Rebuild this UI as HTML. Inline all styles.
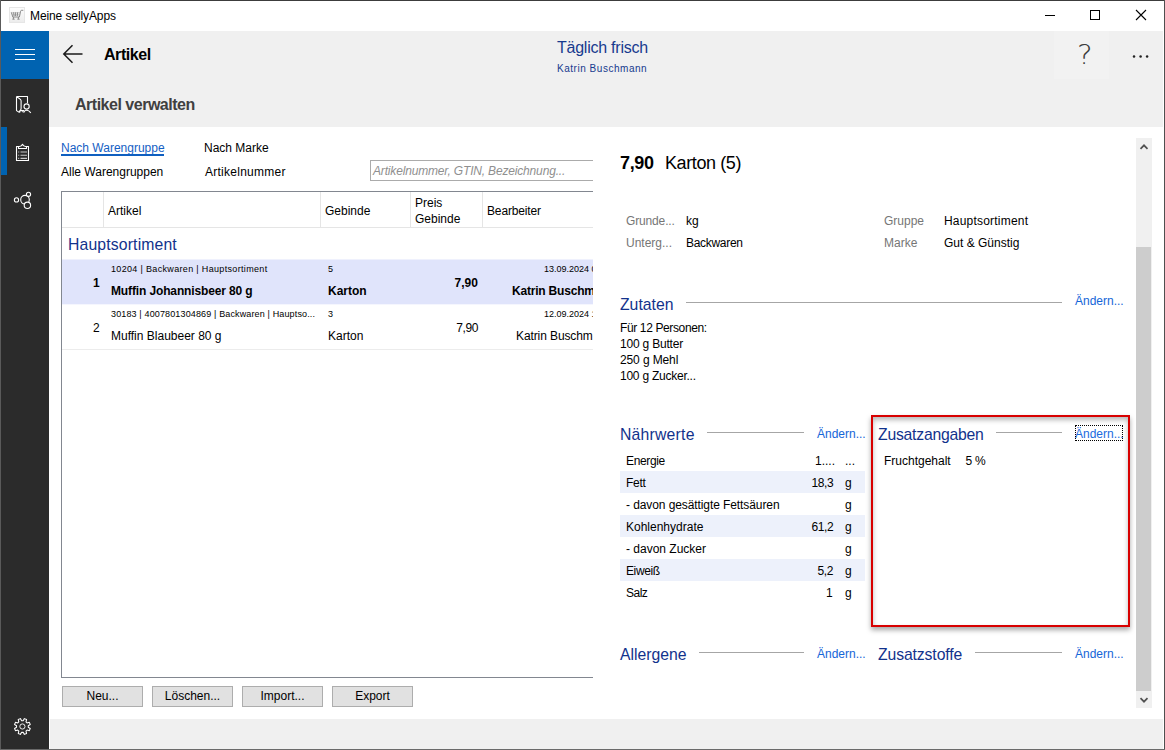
<!DOCTYPE html>
<html lang="de">
<head>
<meta charset="utf-8">
<title>Meine sellyApps</title>
<style>
*{box-sizing:border-box;margin:0;padding:0}
html,body{width:1165px;height:750px;overflow:hidden;background:#fff}
body{font-family:"Liberation Sans",sans-serif;font-size:12px;color:#000;position:relative}
#win{position:absolute;left:0;top:0;width:1165px;height:750px;overflow:hidden;background:#fff}
.abs{position:absolute}
.t{position:absolute;white-space:nowrap;line-height:1;font-size:12px;transform-origin:0 0}
.b{font-weight:bold}
.blue{color:#1a3c8c}
.link{color:#1565d8}
.gray{color:#767676}
.hd{font-size:15.75px;color:#12328c}
.hl{position:absolute;height:1px;background:#a6a6a6}
.sm{font-size:9px}
.btn{position:absolute;height:21px;width:81px;top:686px;background:#e1e1e1;border:1px solid #adadad;text-align:center;line-height:19px;font-size:12px}
.nrow{position:absolute;left:620px;width:245px;height:22px}
.nrow.alt{background:#edf1fb}
</style>
</head>
<body>
<div id="win">
<!-- frame -->
<div class="abs" style="left:0;top:0;width:1165px;height:1px;background:#3c3c3c"></div>
<div class="abs" style="left:0;top:0;width:1px;height:750px;background:#5a5a5a"></div>
<div class="abs" style="left:1164px;top:0;width:1px;height:750px;background:#4f4f4f"></div>
<div class="abs" style="left:0;top:749px;width:1165px;height:1px;background:#6a6a6a"></div>

<!-- title bar -->
<div class="abs" id="titlebar" style="left:1px;top:1px;width:1163px;height:30px;background:#fff"></div>
<span class="t" style="left:30px;top:10px;letter-spacing:-0.1px">Meine sellyApps</span>

<!-- header gray -->
<div class="abs" style="left:49px;top:31px;width:1114px;height:96px;background:#f0f0f0"></div>
<!-- status bar -->
<div class="abs" style="left:50px;top:719px;width:1113px;height:30px;background:#f0f0f0"></div>

<!-- sidebar -->
<div class="abs" style="left:1px;top:31px;width:48px;height:718px;background:#2b2b2b"></div>
<div class="abs" style="left:1px;top:31px;width:48px;height:48px;background:#0063b1"></div>
<div class="abs" style="left:1px;top:127px;width:6px;height:48px;background:#0063b1"></div>

<!-- title bar icon + window buttons -->
<svg class="abs" style="left:9px;top:7px" width="16" height="16" viewBox="0 0 16 16">
<defs><linearGradient id="ig" x1="0" y1="0" x2="0" y2="1"><stop offset="0" stop-color="#fdfdfd"/><stop offset="1" stop-color="#ececec"/></linearGradient></defs>
<rect x="0.5" y="0.5" width="15" height="15" fill="url(#ig)" stroke="#e6e6e6"/>
<path d="M14.300 3.300H12.600Q11.800 3.300 11.600 4.200L10.400 10H3.800L2.300 5.300M4.600 5.300L5.100 9M6.600 5.300V9M8.600 5.300L8.300 9M4.400 10V12M9.400 10V12M3.400 12.200H5.600M8.400 12.200H10.600" fill="none" stroke="#8a8a8a" stroke-width="1"/>
<path d="M2.600 5.800H11M3.300 7.800H10.700" fill="none" stroke="#8a8a8a" stroke-width="0.8" stroke-opacity="0.55"/>
</svg>
<div class="abs" style="left:1045px;top:15px;width:10px;height:1px;background:#000"></div>
<div class="abs" style="left:1090px;top:10px;width:10px;height:10px;border:1px solid #000"></div>
<svg class="abs" style="left:1135px;top:9px" width="12" height="12" viewBox="0 0 12 12"><path d="M1 1l10 10M11 1L1 11" stroke="#000" stroke-width="1.100" fill="none"/></svg>

<!-- hamburger -->
<div class="abs" style="left:15px;top:49px;width:20px;height:1px;background:#fff"></div>
<div class="abs" style="left:15px;top:54px;width:20px;height:1px;background:#fff"></div>
<div class="abs" style="left:15px;top:59px;width:20px;height:1px;background:#fff"></div>

<!-- header content -->
<svg class="abs" style="left:62px;top:44px" width="22" height="20" viewBox="0 0 22 20"><path d="M20.500 10H2M10.500 1.200L1.800 10l8.700 8.800" stroke="#1a1a1a" stroke-width="1.500" fill="none"/></svg>
<span class="t b" style="left:104px;top:47px;font-size:16px;letter-spacing:-0.45px">Artikel</span>
<span class="t b" style="left:75px;top:97px;font-size:16px;letter-spacing:-0.49px;color:#404040">Artikel verwalten</span>
<span class="t" style="left:557px;top:40px;font-size:16px;letter-spacing:-0.24px;color:#173a8e">Täglich frisch</span>
<span class="t" style="left:557px;top:64px;font-size:10px;color:#173a8e;letter-spacing:0.53px">Katrin Buschmann</span>
<div class="abs" style="left:1054px;top:31px;width:55px;height:48px;background:#f2f2f2"></div>
<span class="t" style="left:1076.700px;top:41px;font-family:'DejaVu Sans Light','DejaVu Sans',sans-serif;font-weight:200;font-size:27px;color:#3c3c3c;transform:scaleX(1.09)">?</span>
<svg class="abs" style="left:1130px;top:52px" width="22" height="8" viewBox="0 0 22 8"><circle cx="4" cy="4.400" r="1.250" fill="#222"/><circle cx="10.600" cy="4.400" r="1.250" fill="#222"/><circle cx="17.100" cy="4.400" r="1.250" fill="#222"/></svg>

<!-- sidebar icons -->
<svg class="abs" style="left:10px;top:90px" width="28" height="28" viewBox="10 90 28 28" fill="none" stroke="#fff" stroke-width="1.100" stroke-linejoin="round">
<path d="M16.500 96.500H27.500V103.200M16.500 96.500V110.600L19.600 112.500M16.500 96.500L20.400 99.400Q21.100 100 21.100 101V108.500Q21.100 109.800 19.800 110.600V112.500M19.800 110.600H24.200M22.900 110.600V112.300"/>
<circle cx="26.600" cy="106.500" r="2.600"/>
<path d="M23.700 112.600Q24.300 110.300 26.600 110.300Q28.900 110.300 30.800 112.900"/>
</svg>
<svg class="abs" style="left:10px;top:138px" width="28" height="28" viewBox="10 138 28 28" fill="none" stroke="#fff" stroke-width="1.100" stroke-linejoin="round">
<path d="M19.500 146.500H16.500V160.500H28.500V146.500H25.500M18.500 146.500V148.500H26.500V146.500M19.300 146.500Q21.600 146.300 22.500 144.200Q23.400 146.300 25.700 146.500"/>
<path d="M20.500 152H27M20.500 155.200H27M20.500 158.400H27M18.200 152h1M18.200 155.200h1M18.200 158.400h1" stroke-opacity="0.750"/>
</svg>
<svg class="abs" style="left:10px;top:186px" width="28" height="28" viewBox="10 186 28 28" fill="#2b2b2b" stroke="#fff" stroke-width="1.100">
<circle cx="25" cy="199.700" r="4.300"/>
<circle cx="16.500" cy="199.900" r="2.100"/>
<circle cx="28.500" cy="194.300" r="2.100"/>
<circle cx="27.400" cy="205.300" r="3.200"/>
</svg>
<svg class="abs" style="left:10px;top:714px" width="26" height="26" viewBox="0 0 26 26" fill="none" stroke="#fff" stroke-width="1.050" stroke-linejoin="round">
<path d="M18.25 13.27 L20.26 14.46 L19.34 16.67 L17.08 16.09 L15.99 17.18 L16.57 19.44 L14.36 20.36 L13.17 18.35 L11.63 18.35 L10.44 20.36 L8.23 19.44 L8.81 17.18 L7.72 16.09 L5.46 16.67 L4.54 14.46 L6.55 13.27 L6.55 11.73 L4.54 10.54 L5.46 8.33 L7.72 8.91 L8.81 7.82 L8.23 5.56 L10.44 4.64 L11.63 6.65 L13.17 6.65 L14.36 4.64 L16.57 5.56 L15.99 7.82 L17.08 8.91 L19.34 8.33 L20.26 10.54 L18.25 11.73Z"/>
<circle cx="12.4" cy="12.5" r="2.600" stroke-width="0.900"/>
</svg>

<!-- left panel: filters -->
<span class="t" style="left:61px;top:142px;color:#1460c4">Nach Warengruppe</span>
<div class="abs" style="left:61px;top:154px;width:103px;height:2px;background:#0f5fc0"></div>
<span class="t" style="left:204px;top:142px">Nach Marke</span>
<span class="t" style="left:61px;top:166px">Alle Warengruppen</span>
<span class="t" style="left:205px;top:166px;letter-spacing:0.26px">Artikelnummer</span>
<div class="abs" style="left:370px;top:160px;width:223px;height:21px;border:1px solid #ababab;border-right:none;background:#fff"></div>
<span class="t" style="left:373px;top:165px;font-style:italic;color:#8f8f8f;letter-spacing:-0.17px">Artikelnummer, GTIN, Bezeichnung...</span>

<!-- table -->
<div class="abs" style="left:61px;top:191px;width:532px;height:487px;border:1px solid #828790;border-right:none;background:#fff"></div>
<div class="abs" style="left:62px;top:227px;width:531px;height:1px;background:#e5e5e5"></div>
<div class="abs" style="left:103px;top:192px;width:1px;height:35px;background:#e5e5e5"></div>
<div class="abs" style="left:320px;top:192px;width:1px;height:35px;background:#e5e5e5"></div>
<div class="abs" style="left:410px;top:192px;width:1px;height:35px;background:#e5e5e5"></div>
<div class="abs" style="left:482px;top:192px;width:1px;height:35px;background:#e5e5e5"></div>
<span class="t" style="left:108px;top:205px">Artikel</span>
<span class="t" style="left:325px;top:205px">Gebinde</span>
<span class="t" style="left:415px;top:197px">Preis</span>
<span class="t" style="left:415px;top:213px">Gebinde</span>
<span class="t" style="left:487px;top:205px;letter-spacing:-0.15px">Bearbeiter</span>
<span class="t hd" style="left:68px;top:237px;letter-spacing:0.15px">Hauptsortiment</span>
<div class="abs" style="left:62px;top:259px;width:531px;height:1px;background:#eff1fd"></div>
<div class="abs" style="left:62px;top:260px;width:531px;height:44px;background:#e0e4fb"></div>
<div class="abs" style="left:62px;top:304px;width:531px;height:1px;background:#f5f6fe"></div>
<div class="abs" style="left:62px;top:349px;width:531px;height:1px;background:#ececec"></div>
<span class="t b" style="left:93px;top:277px">1</span>
<span class="t sm" style="left:111px;top:265px;letter-spacing:0.33px">10204 | Backwaren | Hauptsortiment</span>
<span class="t b" style="left:111px;top:285px;letter-spacing:-0.13px">Muffin Johannisbeer 80 g</span>
<span class="t sm" style="left:328px;top:265px">5</span>
<span class="t b" style="left:328px;top:285px">Karton</span>
<span class="t b" style="left:454.500px;top:277px">7,90</span>
<span class="t sm" style="left:544px;top:265px">13.09.2024 0</span>
<span class="t b" style="left:512px;top:285px;letter-spacing:-0.2px">Katrin Buschm</span>
<span class="t" style="left:93px;top:322px">2</span>
<span class="t sm" style="left:111px;top:310px;letter-spacing:0.14px">30183 | 4007801304869 | Backwaren | Hauptso...</span>
<span class="t" style="left:111px;top:330px">Muffin Blaubeer 80 g</span>
<span class="t sm" style="left:328px;top:310px">3</span>
<span class="t" style="left:328px;top:330px">Karton</span>
<span class="t" style="left:456.200px;top:322px;letter-spacing:-0.4px">7,90</span>
<span class="t sm" style="left:544px;top:310px">12.09.2024 1</span>
<span class="t" style="left:516px;top:330px;letter-spacing:-0.1px">Katrin Buschm</span>
<!-- clip right of table -->
<div class="abs" style="left:593px;top:128px;width:20px;height:560px;background:#fff"></div>

<!-- buttons -->
<div class="btn" style="left:62px">Neu...</div>
<div class="btn" style="left:152px">Löschen...</div>
<div class="btn" style="left:242px">Import...</div>
<div class="btn" style="left:332px">Export</div>

<!-- right panel -->
<span class="t b" style="left:620px;top:154px;font-size:18px;letter-spacing:-0.33px">7,90</span>
<span class="t" style="left:665px;top:154px;font-size:18px;letter-spacing:-0.4px">Karton (5)</span>
<span class="t gray" style="left:626px;top:215px;letter-spacing:-0.15px">Grunde...</span>
<span class="t" style="left:686px;top:215px">kg</span>
<span class="t gray" style="left:626px;top:237px">Unterg...</span>
<span class="t" style="left:686px;top:237px;letter-spacing:-0.3px">Backwaren</span>
<span class="t gray" style="left:884px;top:215px">Gruppe</span>
<span class="t" style="left:944px;top:215px;letter-spacing:0.2px">Hauptsortiment</span>
<span class="t gray" style="left:884px;top:237px">Marke</span>
<span class="t" style="left:944px;top:237px">Gut &amp; Günstig</span>

<span class="t hd" style="left:620px;top:297px">Zutaten</span>
<div class="hl" style="left:686px;top:302px;width:376px"></div>
<span class="t link" style="left:1075px;top:295px">Ändern...</span>
<span class="t" style="left:620px;top:322px;letter-spacing:-0.37px">Für 12 Personen:</span>
<span class="t" style="left:620px;top:338px;letter-spacing:-0.2px">100 g Butter</span>
<span class="t" style="left:620px;top:354px;letter-spacing:-0.12px">250 g Mehl</span>
<span class="t" style="left:620px;top:370px;letter-spacing:-0.24px">100 g Zucker...</span>

<span class="t hd" style="left:620px;top:427px;letter-spacing:0.22px">Nährwerte</span>
<div class="hl" style="left:707px;top:432px;width:97px"></div>
<span class="t link" style="left:817px;top:428px">Ändern...</span>
<div class="nrow alt" style="top:471px"></div>
<div class="nrow alt" style="top:515px"></div>
<div class="nrow alt" style="top:559px"></div>
<span class="t" style="left:626px;top:455px;letter-spacing:-0.35px">Energie</span>
<span class="t" style="left:815px;top:455px">1....</span>
<span class="t" style="left:845px;top:455px">...</span>
<span class="t" style="left:626px;top:477px;letter-spacing:-0.25px">Fett</span>
<span class="t" style="left:811.5px;top:477px;letter-spacing:-0.4px">18,3</span>
<span class="t" style="left:845px;top:477px">g</span>
<span class="t" style="left:626px;top:499px;letter-spacing:-0.09px">- davon gesättigte Fettsäuren</span>
<span class="t" style="left:845px;top:499px">g</span>
<span class="t" style="left:626px;top:521px">Kohlenhydrate</span>
<span class="t" style="left:811.5px;top:521px;letter-spacing:-0.4px">61,2</span>
<span class="t" style="left:845px;top:521px">g</span>
<span class="t" style="left:626px;top:543px">- davon Zucker</span>
<span class="t" style="left:845px;top:543px">g</span>
<span class="t" style="left:626px;top:565px;letter-spacing:-0.39px">Eiweiß</span>
<span class="t" style="left:817.500px;top:565px;letter-spacing:-0.4px">5,2</span>
<span class="t" style="left:845px;top:565px">g</span>
<span class="t" style="left:626px;top:587px;letter-spacing:-0.5px">Salz</span>
<span class="t" style="left:826px;top:587px">1</span>
<span class="t" style="left:845px;top:587px">g</span>

<!-- red highlight box -->
<div class="abs" style="left:871px;top:415px;width:259px;height:212px;border:2px solid #d80000;box-shadow:0 3px 5px rgba(0,0,0,0.35), inset 0 3px 5px rgba(0,0,0,0.28)"></div>
<span class="t hd" style="left:878px;top:427px;letter-spacing:-0.23px">Zusatzangaben</span>
<div class="hl" style="left:996px;top:432px;width:66px"></div>
<span class="t link" style="left:1075px;top:428px;color:#1a6ae0">Ändern...</span>
<div class="abs" style="left:1075px;top:425px;width:48px;height:16px;border:1px dotted #000"></div>
<span class="t" style="left:884px;top:455px">Fruchtgehalt</span>
<span class="t" style="left:965.500px;top:455px;letter-spacing:-0.3px">5 %</span>

<span class="t hd" style="left:620px;top:647px">Allergene</span>
<div class="hl" style="left:699px;top:652px;width:105px"></div>
<span class="t link" style="left:817px;top:648px">Ändern...</span>
<span class="t hd" style="left:878px;top:647px;letter-spacing:-0.11px">Zusatzstoffe</span>
<div class="hl" style="left:975px;top:652px;width:87px"></div>
<span class="t link" style="left:1075px;top:648px">Ändern...</span>

<!-- scrollbar -->
<div class="abs" style="left:1136px;top:138px;width:16px;height:570px;background:#f0f0f0"></div>
<div class="abs" style="left:1136px;top:247px;width:15px;height:444px;background:#cdcdcd"></div>
<svg class="abs" style="left:1139px;top:143px" width="10" height="8" viewBox="0 0 10 8"><path d="M1.500 5.800l3.500-3.500 3.500 3.500" stroke="#505050" stroke-width="1.700" fill="none"/></svg>
<svg class="abs" style="left:1139px;top:696px" width="10" height="8" viewBox="0 0 10 8"><path d="M1.500 2.200l3.500 3.500 3.500-3.500" stroke="#505050" stroke-width="1.700" fill="none"/></svg>

</div>
</body>
</html>
